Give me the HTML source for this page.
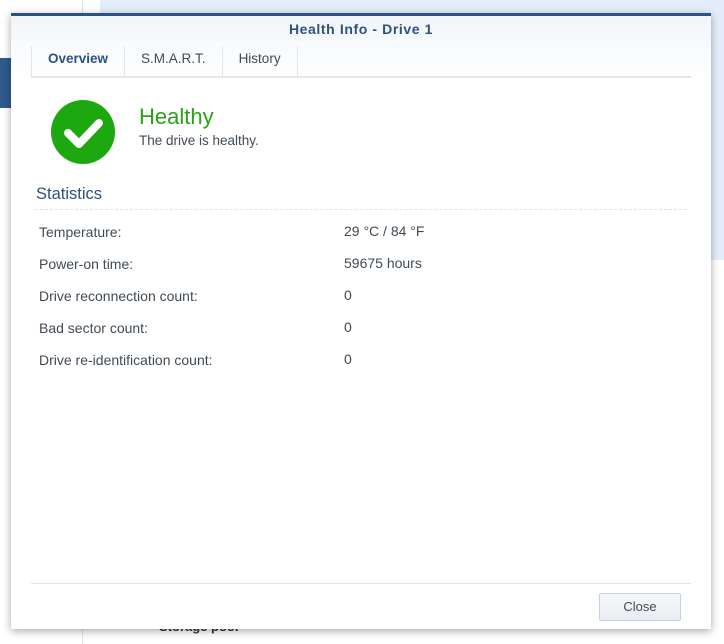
<!DOCTYPE html>
<html><head><meta charset="utf-8"><style>
*{margin:0;padding:0;box-sizing:border-box}
body{width:724px;height:644px;overflow:hidden;background:#fff;position:relative;font-family:"Liberation Sans","DejaVu Sans",sans-serif;color:#414b55}
.bgblue{position:absolute;left:100px;top:0;width:624px;height:260px;background:#e4eefa}
.vline{position:absolute;left:82px;top:0;width:1px;height:644px;background:#dde3ea}
.leftblock{position:absolute;left:0;top:58px;width:11px;height:50px;background:#2f5a8c}
.sp{position:absolute;left:159px;top:619px;font-size:13px;font-weight:bold;color:#333}
.dlg{position:absolute;left:11px;top:13px;width:700px;height:616px;background:#fff;border-top:3px solid #2c527f;box-shadow:0 2px 8px rgba(0,0,0,.35)}
.hdr{height:63px;background:linear-gradient(#f2f6fa,#fff)}
.title{text-align:center;font-size:14px;letter-spacing:.6px;font-weight:bold;color:#2c527f;padding-top:5px;height:28px}
.tabs{position:absolute;left:20px;top:30px;width:660px;height:32px;border-bottom:2px solid #e3e6ea;display:flex}
.tab{padding:0 16px;font-size:13.5px;line-height:26px;height:30px;border-right:1px solid #e3e6ea;color:#414b55}
.tab.a{color:#2c527f;font-weight:bold;border-left:1px solid #e3e6ea}
.ic{position:absolute;left:40px;top:84px;width:64px;height:64px;border-radius:50%;background:#1ea80f}
.h1{position:absolute;left:128px;top:88px;font-size:22px;color:#2aa116}
.h2{position:absolute;left:128px;top:117px;font-size:13.5px}
.st{position:absolute;left:25px;top:169px;font-size:16.5px;color:#2c527f}
.dash{position:absolute;left:24px;top:193px;width:652px;border-top:1px dashed #dfe3e8}
.r{position:absolute;font-size:14px}
.foot{position:absolute;left:20px;top:567px;width:660px;border-top:1px solid #dfe3e8}
.btn{position:absolute;left:588px;top:577px;width:82px;height:28px;border:1px solid #c8d0d8;border-radius:2px;background:linear-gradient(#f6f8fa,#e8edf2);text-align:center;line-height:26px;font-size:13px}
</style></head><body>
<div class="bgblue"></div><div class="vline"></div><div class="leftblock"></div>
<div class="sp">Storage pool</div>
<div class="dlg">
<div class="hdr"><div class="title">Health Info - Drive 1</div></div>
<div class="tabs"><div class="tab a">Overview</div><div class="tab">S.M.A.R.T.</div><div class="tab">History</div></div>
<div class="ic"><svg width="64" height="64" viewBox="0 0 64 64"><path d="M17 33 L28 44 L48 23" fill="none" stroke="#fff" stroke-width="8" stroke-linecap="round" stroke-linejoin="round"/></svg></div>
<div class="h1">Healthy</div>
<div class="h2">The drive is healthy.</div>
<div class="st">Statistics</div>
<div class="dash"></div>
<div class="r" style="left:28px;top:208px">Temperature:</div><div class="r" style="left:333px;top:207px">29 °C / 84 °F</div>
<div class="r" style="left:28px;top:240px">Power-on time:</div><div class="r" style="left:333px;top:239px">59675 hours</div>
<div class="r" style="left:28px;top:272px">Drive reconnection count:</div><div class="r" style="left:333px;top:271px">0</div>
<div class="r" style="left:28px;top:304px">Bad sector count:</div><div class="r" style="left:333px;top:303px">0</div>
<div class="r" style="left:28px;top:336px">Drive re-identification count:</div><div class="r" style="left:333px;top:335px">0</div>
<div class="foot"></div>
<div class="btn">Close</div>
</div>
</body></html>
